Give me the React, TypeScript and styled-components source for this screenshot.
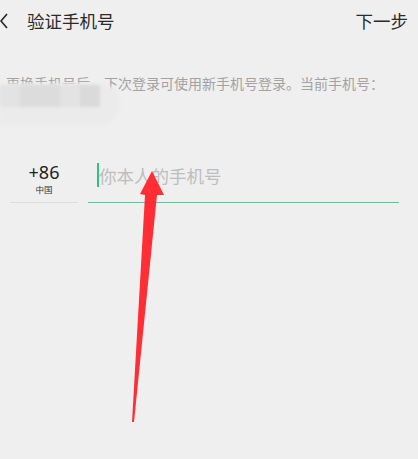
import React from "react";
import styled, { createGlobalStyle } from "styled-components";

const Global = createGlobalStyle`
  html, body { margin: 0; padding: 0; background: #efefef; }
  body { font-family: "Noto Sans CJK SC", "Noto Sans", sans-serif; }
`;

const Page = styled.div`
  position: relative;
  width: 418px;
  height: 459px;
  background: #efefef;
  overflow: hidden;
`;

const Header = styled.div`
  display: flex;
  align-items: center;
  justify-content: space-between;
  height: 42px;
  padding: 0 10px 0 0;
`;

const HeaderLeft = styled.div`
  display: flex;
  align-items: center;
  gap: 19px;
`;

const Title = styled.div`
  font-size: 17.5px;
  color: #2a2a2a;
  line-height: 1;
`;

const NextBtn = styled.div`
  font-size: 17.5px;
  color: #2a2a2a;
  line-height: 1;
`;

const Desc = styled.div`
  position: relative;
  margin-top: 33px;
  padding-left: 6px;
  font-size: 14px;
  line-height: 16px;
  color: #a2a2a2;
  white-space: nowrap;
`;

const Mosaic = styled.div`
  position: absolute;
  left: 0;
  top: 8px;
  width: 120px;
  height: 42px;
  border-radius: 0 21px 21px 0;
  background: #ebebeb;
  display: flex;
  align-items: flex-start;
  padding-top: 2px;
  box-sizing: border-box;
  filter: blur(1.5px);
`;

const Tile = styled.div<{ $shade: string; $w: number }>`
  width: ${(p) => p.$w}px;
  height: 22px;
  background: ${(p) => p.$shade};
`;

const PhoneRow = styled.div`
  display: flex;
  align-items: flex-end;
  margin-top: 68px;
  padding: 0 19px 0 10px;
  gap: 10px;
`;

const Country = styled.div`
  width: 68px;
  height: 44px;
  border-bottom: 1px solid #dcdcdc;
  display: flex;
  flex-direction: column;
  align-items: center;
  box-sizing: border-box;
`;

const Code = styled.div`
  font-family: "Noto Sans", sans-serif;
  font-size: 18px;
  line-height: 20px;
  color: #222;
  margin-top: 3px;
`;

const CountryName = styled.div`
  font-size: 8.5px;
  line-height: 10px;
  color: #333;
  margin-top: 2px;
`;

const InputWrap = styled.div`
  flex: 1;
  height: 44px;
  border-bottom: 1px solid #3ed49a;
  display: flex;
  align-items: flex-start;
  padding-left: 9px;
  padding-top: 3px;
  box-sizing: border-box;
`;

const Caret = styled.div`
  width: 2px;
  height: 24px;
  background: #2ec27e;
  margin-top: 1px;
`;

const Placeholder = styled.div`
  font-size: 17.5px;
  line-height: 24px;
  color: #bdbdbd;
  margin-top: 2px;
`;

const ArrowLayer = styled.svg`
  position: absolute;
  left: 0;
  top: 0;
  pointer-events: none;
`;

const tiles = [
  { w: 20, c: "#e3e3e3" },
  { w: 40, c: "#dcdcdc" },
  { w: 20, c: "#e3e3e3" },
  { w: 20, c: "#dadada" },
];

export default function App() {
  return (
    <>
      <Global />
      <Page>
        <Header>
          <HeaderLeft>
            <svg width="8" height="16" viewBox="0 0 8 16">
              <path d="M7 1 L1 8 L7 15" fill="none" stroke="#222" strokeWidth="1.6" />
            </svg>
            <Title>验证手机号</Title>
          </HeaderLeft>
          <NextBtn>下一步</NextBtn>
        </Header>
        <Desc>
          更换手机号后，下次登录可使用新手机号登录。当前手机号：
          <Mosaic>
            {tiles.map((t, i) => (
              <Tile key={i} $w={t.w} $shade={t.c} />
            ))}
          </Mosaic>
        </Desc>
        <PhoneRow>
          <Country>
            <Code>+86</Code>
            <CountryName>中国</CountryName>
          </Country>
          <InputWrap>
            <Caret />
            <Placeholder>你本人的手机号</Placeholder>
          </InputWrap>
        </PhoneRow>
        <ArrowLayer width="418" height="459" viewBox="0 0 418 459">
          <polygon points="152,171 164,195 157,195 134,422 132,422 145,195 140,194" fill="#ff2e35" />
        </ArrowLayer>
      </Page>
    </>
  );
}
